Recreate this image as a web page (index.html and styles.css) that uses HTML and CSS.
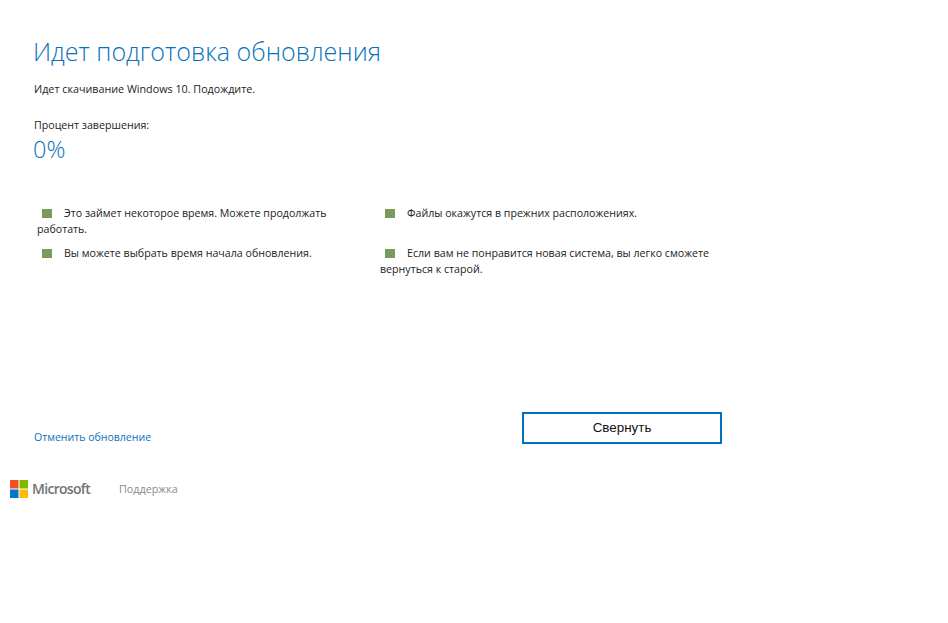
FILE: index.html
```html
<!DOCTYPE html>
<html lang="ru">
<head>
<meta charset="utf-8">
<title>Идет подготовка обновления</title>
<link rel="stylesheet" href="styles.css">
</head>
<body>
<main class="page">
  <h1 class="title">Идет подготовка обновления</h1>
  <p class="status">Идет скачивание Windows 10. Подождите.</p>
  <p class="progress-label">Процент завершения:</p>
  <p class="progress-value">0%</p>
  <ul class="benefits">
    <li class="benefit"><span class="bullet"></span>Это займет некоторое время. Можете продолжать работать.</li>
    <li class="benefit"><span class="bullet"></span>Файлы окажутся в прежних расположениях.</li>
    <li class="benefit"><span class="bullet"></span>Вы можете выбрать время начала обновления.</li>
    <li class="benefit"><span class="bullet"></span>Если вам не понравится новая система, вы легко сможете вернуться к старой.</li>
  </ul>
  <div class="actions">
    <a class="cancel" href="#">Отменить обновление</a>
    <button class="minimize" type="button">Свернуть</button>
  </div>
</main>
<footer class="footer">
  <svg class="logo" width="18" height="18" viewBox="0 0 18 18" aria-hidden="true">
    <rect x="0" y="0" width="8.5" height="8.5" fill="#f25022"/>
    <rect x="9.5" y="0" width="8.5" height="8.5" fill="#7fba00"/>
    <rect x="0" y="9.5" width="8.5" height="8.5" fill="#0078c8"/>
    <rect x="9.5" y="9.5" width="8.5" height="8.5" fill="#ffb900"/>
  </svg>
  <span class="brand">Microsoft</span>
  <a class="support" href="#">Поддержка</a>
</footer>
</body>
</html>
```
FILE: styles.css
```css
html, body {
  margin: 0;
  padding: 0;
  background: #fff;
}
body {
  font-family: "Open Sans", "Noto Sans", sans-serif;
  font-size: 10.75px;
  color: #222;
  height: 623px;
  overflow: hidden;
}
.page {
  width: 688px;
  padding: 34px 0 0 34px;
}
.title {
  margin: 0 0 0 -1px;
  font-size: 25.1px;
  line-height: 34px;
  font-weight: 300;
  color: #0a72bb;
}
.status {
  margin: 13px 0 0;
  line-height: 16px;
}
.progress-label {
  margin: 20px 0 0;
  line-height: 16px;
  font-size: 10.65px;
}
.progress-value {
  margin: 1px 0 0 -1px;
  font-size: 23.5px;
  line-height: 30px;
  font-weight: 300;
  color: #0a72bb;
}
.benefits {
  list-style: none;
  margin: 41px 0 0 3px;
  padding: 0;
  display: grid;
  grid-template-columns: 343px 343px;
  row-gap: 8px;
  font-size: 10.65px;
}
.benefit {
  line-height: 16px;
  width: 335px;
}
.bullet {
  display: inline-block;
  width: 10px;
  height: 9px;
  margin: 0 12px 0 5px;
  vertical-align: -1px;
  background: #7a9a5e;
}
.actions {
  display: flex;
  justify-content: space-between;
  align-items: flex-end;
  margin-top: 135px;
}
.cancel {
  color: #0a72bb;
  text-decoration: none;
  line-height: 16px;
  margin-bottom: -1px;
  font-size: 10.55px;
}
.minimize {
  width: 200px;
  height: 32px;
  margin: 0;
  padding: 0 0 2px;
  box-sizing: border-box;
  background: #fff;
  border: 2px solid #0071bc;
  border-radius: 0;
  font-family: "Liberation Sans", Arial, sans-serif;
  font-size: 13.4px;
  color: #111;
}
.footer {
  display: flex;
  align-items: center;
  padding: 35px 0 0 10px;
}
.logo {
  flex: none;
}
.brand {
  margin-left: 4px;
  font-size: 14px;
  font-weight: 600;
  letter-spacing: -0.7px;
  color: #737373;
}
.support {
  margin-left: 29px;
  color: #8a8a8a;
  text-decoration: none;
}
```
